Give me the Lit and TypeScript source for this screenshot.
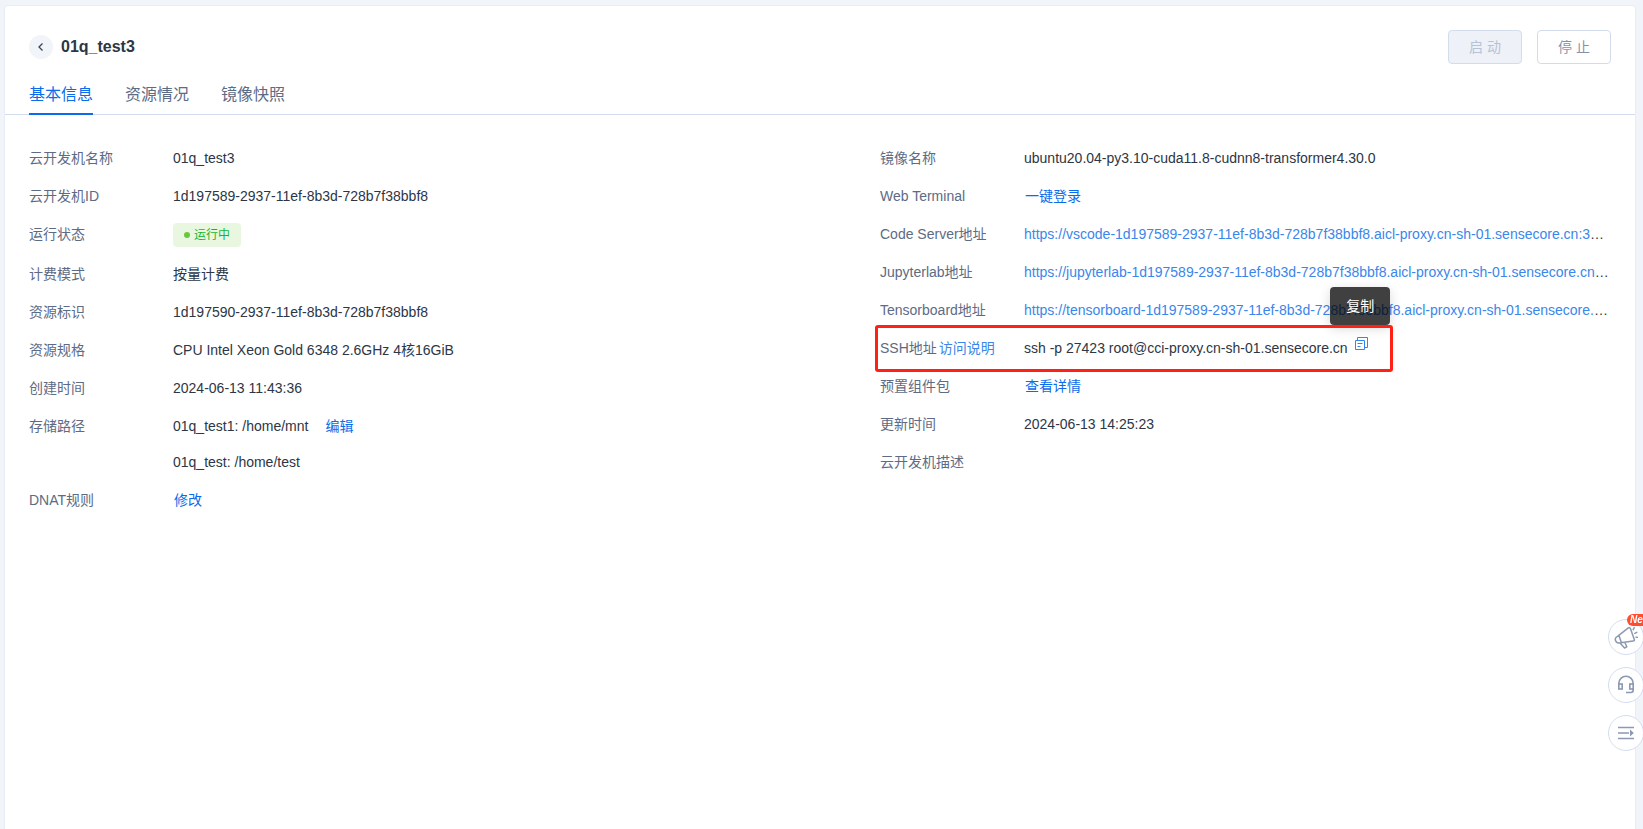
import { LitElement, html, css, svg, TemplateResult } from "lit";
import { customElement } from "lit/decorators.js";

const FONT = css`"Liberation Sans", Arial, "Noto Sans CJK SC", sans-serif`;

/** One label / value line of the detail lists. */
@customElement("info-row")
class InfoRow extends LitElement {
  static styles = css`
    :host {
      display: flex;
      align-items: flex-start;
      position: relative;
      font: 14px/22px ${FONT};
    }
    .label {
      flex: 0 0 144px;
      color: #5d6b84;
      white-space: nowrap;
    }
    .value {
      flex: 1;
      min-width: 0;
      color: #2c3645;
    }
  `;
  render() {
    return html`
      <div class="label"><slot name="label"></slot></div>
      <div class="value"><slot></slot></div>
    `;
  }
}

const chevron = svg`<path d="M7.5 2.5 4 6l3.5 3.5" fill="none" stroke="#3a4555" stroke-width="1.3"/>`;

@customElement("app-root")
class AppRoot extends LitElement {
  static styles = css`
    :host {
      display: flex;
      flex-direction: column;
      box-sizing: border-box;
      min-height: 100vh;
      padding: 5px 7px 0 4px;
      background: #f1f5f9;
      font: 14px/22px ${FONT};
      color: #2c3645;
    }
    .card {
      flex: 1;
      background: #fff;
      border: 1px solid #e8ecf8;
      border-bottom: 0;
      border-radius: 4px 4px 0 0;
    }
    button {
      font: inherit;
      cursor: pointer;
    }
    a {
      text-decoration: none;
    }
    .head {
      display: flex;
      align-items: center;
      padding: 24px 24px 0;
    }
    .back {
      display: grid;
      place-items: center;
      width: 24px;
      height: 24px;
      padding: 0;
      border: 0;
      border-radius: 50%;
      background: #f1f5f9;
    }
    h1 {
      flex: 1;
      margin: 0 0 0 8px;
      font-size: 16px;
      line-height: 24px;
      font-weight: 700;
    }
    .actions {
      display: flex;
      gap: 15px;
    }
    .action {
      width: 74px;
      height: 34px;
      padding: 0;
      border: 1px solid #d3dcec;
      border-radius: 4px;
      background: #fff;
      color: #8492ad;
    }
    .action:disabled {
      background: #eef1f7;
      color: #b7c2d6;
      cursor: not-allowed;
    }
    .tabs {
      display: flex;
      gap: 32px;
      margin-top: 19px;
      padding: 0 24px;
      box-shadow: inset 0 -1px #d3dcec;
    }
    .tab {
      padding: 0 0 6px;
      border: 0;
      border-bottom: 2px solid transparent;
      background: none;
      font-size: 16px;
      line-height: 24px;
      color: #5d6b84;
    }
    .tab.active {
      color: #0a6cea;
      border-color: #0a6cea;
    }
    .details {
      display: grid;
      grid-template-columns: 1fr 1fr;
      gap: 120px;
      padding: 32px 24px;
    }
    .list {
      display: flex;
      flex-direction: column;
      gap: 16px;
      min-width: 0;
    }
    .tag {
      display: flex;
      align-items: center;
      gap: 4px;
      width: max-content;
      height: 24px;
      box-sizing: border-box;
      padding: 0 11px;
      border-radius: 4px;
      background: #eaf7e0;
      color: #16b536;
      font-size: 12px;
    }
    .dot {
      width: 6px;
      height: 6px;
      border-radius: 50%;
      background: #67c93a;
    }
    .link {
      padding: 0 1px;
      color: #0a6cea;
    }
    .soft {
      color: #3a86ea;
    }
    .help {
      margin-left: 2px;
    }
    .after {
      margin-left: 16px;
    }
    .url {
      overflow: hidden;
      white-space: nowrap;
      text-overflow: ellipsis;
    }
    .paths {
      display: flex;
      flex-direction: column;
      gap: 14px;
    }
    .command {
      display: flex;
      gap: 7px;
    }
    .copy {
      position: relative;
      width: 13px;
      height: 13px;
      padding: 0;
      border: 0;
      background: none;
    }
    .copy svg {
      display: block;
    }
    .tip {
      position: absolute;
      left: 50%;
      bottom: 25px;
      width: 60px;
      margin-left: -31px;
      border-radius: 4px;
      background: rgba(0, 0, 0, 0.75);
      box-shadow: 0 3px 12px rgba(0, 0, 0, 0.16);
      color: #fff;
      line-height: 38px;
    }
    .tip::after {
      content: "";
      position: absolute;
      left: 27px;
      top: 38px;
      border: 3px solid transparent;
      border-top: 3px solid rgba(0, 0, 0, 0.75);
      border-bottom: 0;
    }
    .mark {
      position: absolute;
      left: -5px;
      top: -12px;
      bottom: -13px;
      width: 518px;
      box-sizing: border-box;
      border: 3px solid #ff2116;
      border-radius: 3px;
      pointer-events: none;
    }
    .float {
      position: fixed;
      right: -1px;
      bottom: 78px;
      display: flex;
      flex-direction: column;
      gap: 12px;
    }
    .round {
      position: relative;
      display: grid;
      place-items: center;
      width: 36px;
      height: 36px;
      padding: 0;
      border: 1px solid #d3dcf0;
      border-radius: 50%;
      background: #fff;
    }
    .new {
      position: absolute;
      left: 18px;
      top: -6px;
      padding: 0 4px 0 3px;
      border-radius: 6px;
      background: #ff4d2e;
      color: #fff;
      font-size: 10px;
      font-style: italic;
      font-weight: 700;
      line-height: 12px;
    }
  `;

  url(label: string, address: string): TemplateResult {
    return html`<info-row>
      <span slot="label">${label}</span>
      <div class="url"><a class="soft" href="#">${address}</a></div>
    </info-row>`;
  }

  row(label: string, value: unknown): TemplateResult {
    return html`<info-row><span slot="label">${label}</span>${value}</info-row>`;
  }

  render() {
    return html`
      <main class="card">
        <header class="head">
          <button class="back" aria-label="返回">
            <svg width="12" height="12" viewBox="0 0 12 12">${chevron}</svg>
          </button>
          <h1>01q_test3</h1>
          <div class="actions">
            <button class="action" disabled>启 动</button>
            <button class="action">停 止</button>
          </div>
        </header>
        <nav class="tabs" role="tablist">
          <button class="tab active" role="tab" aria-selected="true">基本信息</button>
          <button class="tab" role="tab" aria-selected="false">资源情况</button>
          <button class="tab" role="tab" aria-selected="false">镜像快照</button>
        </nav>
        <section class="details">
          <div class="list">
            ${this.row("云开发机名称", "01q_test3")}
            ${this.row("云开发机ID", "1d197589-2937-11ef-8b3d-728b7f38bbf8")}
            ${this.row("运行状态", html`<div class="tag"><span class="dot"></span>运行中</div>`)}
            ${this.row("计费模式", "按量计费")}
            ${this.row("资源标识", "1d197590-2937-11ef-8b3d-728b7f38bbf8")}
            ${this.row("资源规格", "CPU Intel Xeon Gold 6348 2.6GHz 4核16GiB")}
            ${this.row("创建时间", "2024-06-13 11:43:36")}
            ${this.row(
              "存储路径",
              html`<div class="paths">
                <div>01q_test1: /home/mnt<a class="link after" href="#">编辑</a></div>
                <div>01q_test: /home/test</div>
              </div>`
            )}
            ${this.row("DNAT规则", html`<a class="link" href="#">修改</a>`)}
          </div>
          <div class="list">
            ${this.row("镜像名称", "ubuntu20.04-py3.10-cuda11.8-cudnn8-transformer4.30.0")}
            ${this.row("Web Terminal", html`<a class="link" href="#">一键登录</a>`)}
            ${this.url("Code Server地址", "https://vscode-1d197589-2937-11ef-8b3d-728b7f38bbf8.aicl-proxy.cn-sh-01.sensecore.cn:30443")}
            ${this.url("Jupyterlab地址", "https://jupyterlab-1d197589-2937-11ef-8b3d-728b7f38bbf8.aicl-proxy.cn-sh-01.sensecore.cn:30443")}
            ${this.url("Tensorboard地址", "https://tensorboard-1d197589-2937-11ef-8b3d-728b7f38bbf8.aicl-proxy.cn-sh-01.sensecore.cn:30443")}
            <info-row>
              <span slot="label">SSH地址<a class="soft help" href="#">访问说明</a></span>
              <div class="command">
                <span>ssh -p 27423 root@cci-proxy.cn-sh-01.sensecore.cn</span>
                <button class="copy" aria-label="复制">
                  <svg width="13" height="13" viewBox="0 0 13 13" fill="none" stroke="#2f86f6">
                    <path d="M0.500 3.500H9.500V12.500H0.500Z" />
                    <path d="M2.500 3V0.500H12.500V10.500H10M2.500 6.500H7.500M2.500 9.500H5.500" />
                  </svg>
                  <span class="tip" role="tooltip">复制</span>
                </button>
              </div>
              <div class="mark"></div>
            </info-row>
            ${this.row("预置组件包", html`<a class="link" href="#">查看详情</a>`)}
            ${this.row("更新时间", "2024-06-13 14:25:23")}
            ${this.row("云开发机描述", "")}
          </div>
        </section>
      </main>
      <aside class="float">
        <button class="round" aria-label="公告">
          <svg width="24" height="24" viewBox="0 0 24 24" fill="none" stroke="#8c99b1" stroke-width="1.5" stroke-linejoin="round" stroke-linecap="round">
            <path d="M14 3.200Q15.800 1.800 16.500 3.800L20.300 14.500Q20.800 16 19 16.100L5 18Q2.500 18.200 1.500 15.500T3.500 11.300ZM5 10.500 7.300 17.500M6 18 10.500 23 12.800 21.800 10.800 17.300" />
            <path d="M19.200 4.600 20.200 2.700M20.800 8.300 22.800 7.300M22 12.300H23.300" />
          </svg>
          <span class="new">New</span>
        </button>
        <button class="round" aria-label="客服">
          <svg width="18" height="20" viewBox="0 0 18 20" fill="none" stroke="#8c99b1" stroke-width="1.6">
            <path d="M1.800 10V8.500a7.200 7.200 0 0 1 14.400 0V10M16.200 13V15a2.500 2.500 0 0 1-2.500 2.500H9" />
            <rect x="1.800" y="9" width="3.400" height="5" /><rect x="12.800" y="9" width="3.400" height="5" />
          </svg>
        </button>
        <button class="round" aria-label="收起">
          <svg width="16" height="14" viewBox="0 0 16 14" fill="none" stroke="#8c99b1" stroke-width="1.6">
            <path d="M0 1.500H16M0 7H11M0 12.500H16" />
            <path d="M12 3.500 15.800 7 12 10.500Z" fill="#8c99b1" stroke="none" />
          </svg>
        </button>
      </aside>
    `;
  }
}
